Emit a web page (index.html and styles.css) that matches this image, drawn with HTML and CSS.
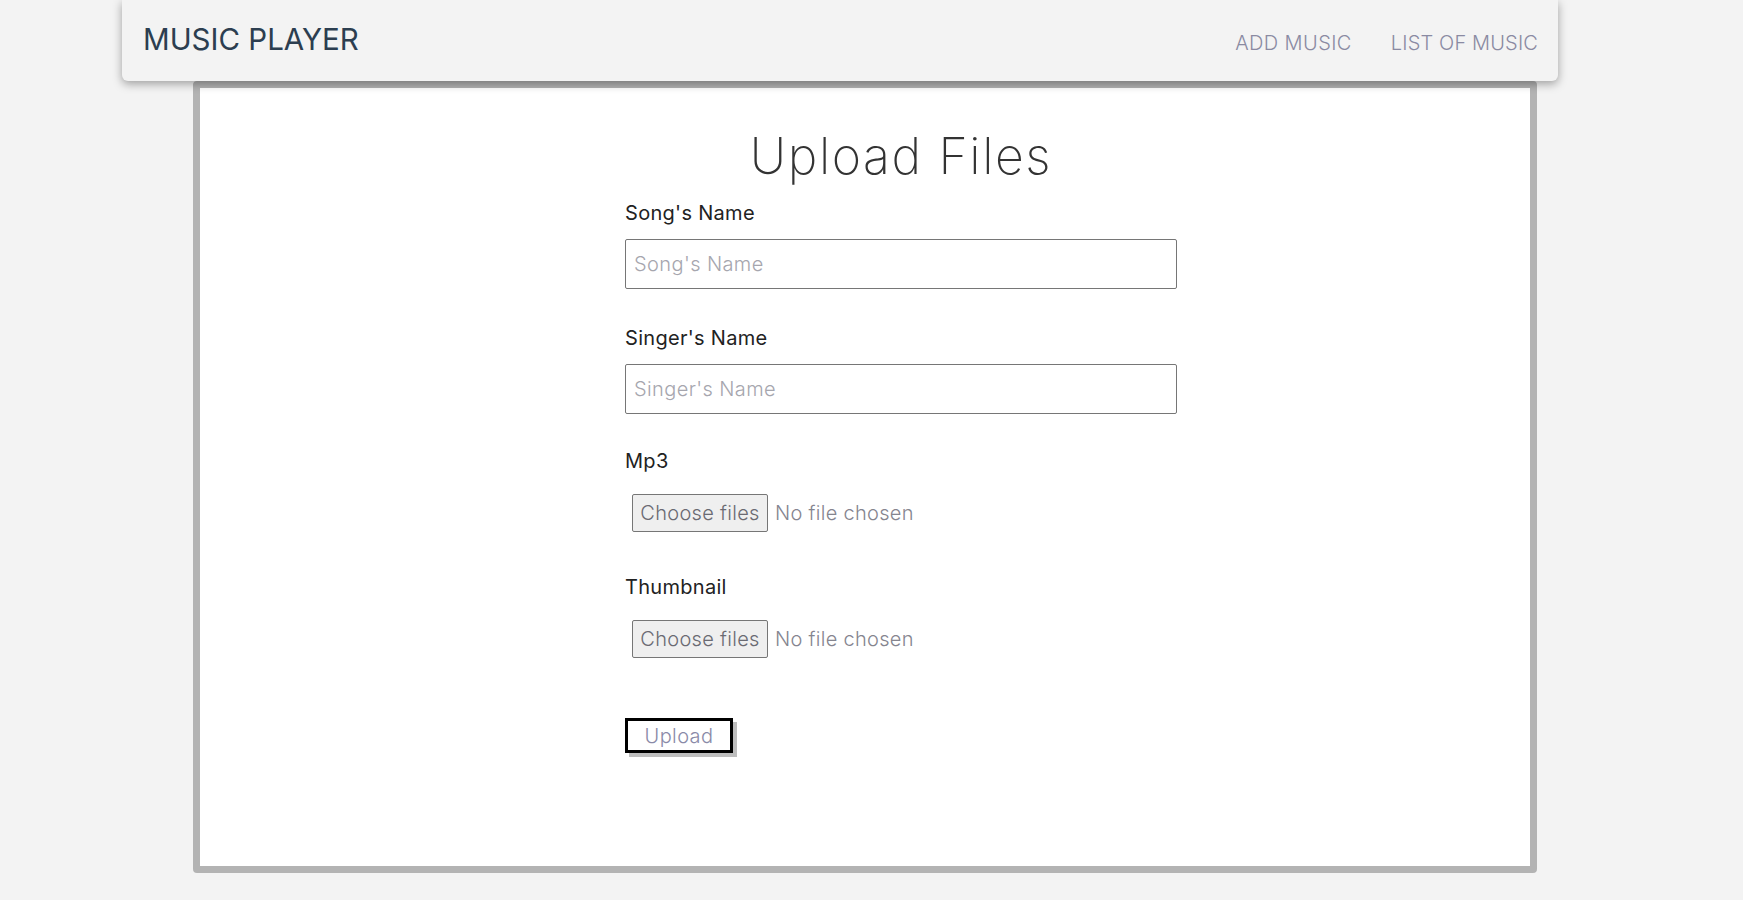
FILE: index.html
```html
<!DOCTYPE html>
<html>
<head>
<meta charset="utf-8">
<title>Music Player</title>
<link rel="stylesheet" href="styles.css">
</head>
<body>
<header class="navbar">
  <div class="brand">MUSIC PLAYER</div>
  <nav class="links">
    <a class="link" href="#">ADD MUSIC</a>
    <a class="link" href="#">LIST OF MUSIC</a>
  </nav>
</header>
<main class="panel">
  <div class="column">
    <h1 class="title">Upload Files</h1>
    <form class="form">
      <div class="group">
        <label class="label">Song's Name</label>
        <input class="text-input" type="text" placeholder="Song's Name">
      </div>
      <div class="group group-tight">
        <label class="label">Singer's Name</label>
        <input class="text-input" type="text" placeholder="Singer's Name">
      </div>
      <div class="group group-file">
        <label class="label">Mp3</label>
        <div class="file-row">
          <span class="file-btn">Choose files</span>
          <span class="file-text">No file chosen</span>
        </div>
      </div>
      <div class="group group-file">
        <label class="label">Thumbnail</label>
        <div class="file-row">
          <span class="file-btn">Choose files</span>
          <span class="file-text">No file chosen</span>
        </div>
      </div>
      <button class="upload" type="button">Upload</button>
    </form>
  </div>
</main>
</body>
</html>
```

FILE: styles.css
```css
* { box-sizing: border-box; }

body {
  margin: 0;
  background: #f3f3f3;
  font-family: Inter, "Open Sans", "Liberation Sans", sans-serif;
}

.navbar {
  position: relative;
  z-index: 2;
  margin-left: 122px;
  width: 1436px;
  height: 81px;
  background: #f3f3f3;
  border-radius: 0 0 6px 6px;
  box-shadow: 0 3px 10px rgba(0, 0, 0, 0.35);
  display: flex;
  align-items: baseline;
  justify-content: space-between;
  padding: 19px 20px 0 21px;
}

.brand {
  font-size: 29.5px;
  line-height: 40px;
  font-weight: 400;
  color: #2c3e50;
}

.links {
  display: flex;
  gap: 39px;
}

.link {
  font-size: 20px;
  line-height: 24px;
  font-weight: 300;
  color: #8a8aa2;
  text-decoration: none;
  letter-spacing: 0.15px;
}

.link:first-child {
  letter-spacing: 0.4px;
}

.panel {
  position: relative;
  z-index: 1;
  margin-left: 193px;
  width: 1344px;
  height: 792px;
  background: #fff;
  border: 7px solid #b3b3b3;
  border-radius: 4px;
  padding-top: 38px;
}

.column {
  margin-left: 425px;
  width: 552px;
  display: flex;
  flex-direction: column;
}

.title {
  margin: 0;
  text-align: center;
  font-size: 50px;
  line-height: 60px;
  font-weight: 200;
  letter-spacing: 1.6px;
  color: #333;
}

.form {
  margin-top: 15px;
  display: flex;
  flex-direction: column;
}

.group {
  display: flex;
  flex-direction: column;
  margin-bottom: 37px;
}

.group-tight {
  margin-bottom: 35px;
}

.group-file {
  margin-bottom: 43px;
}

.label {
  font-size: 20px;
  line-height: 24px;
  font-weight: 400;
  letter-spacing: 0.3px;
  color: #222;
  margin-bottom: 14px;
}

.text-input {
  width: 552px;
  height: 50px;
  border: 1px solid #767676;
  border-radius: 2px;
  padding: 0 8px;
  font-family: inherit;
  font-size: 20px;
  font-weight: 300;
  letter-spacing: 0.4px;
  color: #333;
  outline: none;
}

.text-input::placeholder {
  color: #a6a6ae;
  font-weight: 300;
}

.file-row {
  display: flex;
  align-items: center;
  margin-top: 7px;
  padding-left: 7px;
}

.file-btn {
  width: 136px;
  height: 38px;
  display: flex;
  align-items: center;
  justify-content: center;
  background: #efefef;
  border: 1px solid #767676;
  border-radius: 2px;
  font-size: 20px;
  font-weight: 300;
  letter-spacing: 0.3px;
  color: #6a6a72;
}

.file-text {
  margin-left: 7px;
  font-size: 20px;
  font-weight: 300;
  letter-spacing: 0.3px;
  color: #85858f;
}

.upload {
  margin-top: 17px;
  width: 108px;
  height: 35px;
  padding: 0;
  background: #fff;
  border: 3px solid #000;
  box-shadow: 4px 4px 0 #bdbdbd;
  font-family: inherit;
  font-size: 20px;
  font-weight: 300;
  letter-spacing: 0.4px;
  color: #8a8aa8;
  cursor: pointer;
}
```
